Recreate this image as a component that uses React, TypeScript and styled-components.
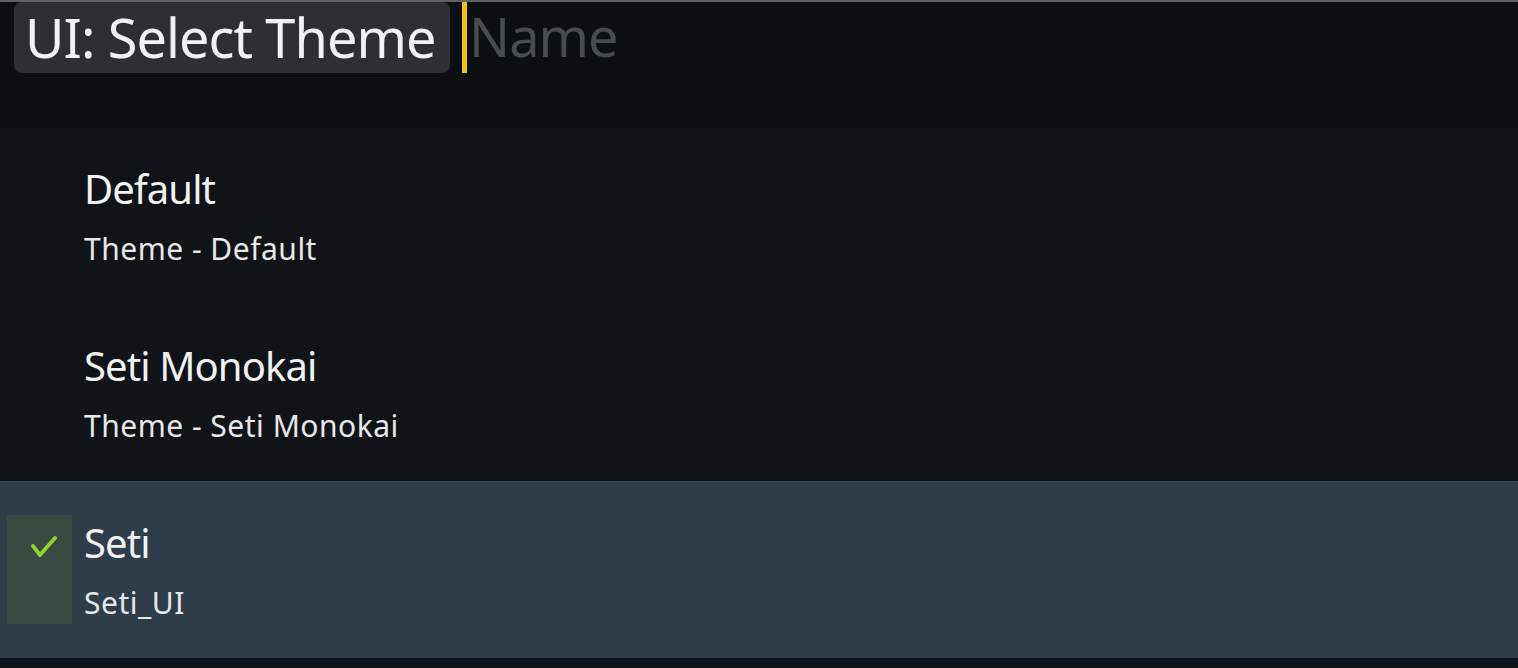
import { createGlobalStyle } from 'styled-components';
import styled from 'styled-components';

const GlobalStyle = createGlobalStyle`
  html, body {
    margin: 0;
    padding: 0;
    background: #0f1317;
  }
  body {
    font-family: 'Noto Sans', 'Open Sans', sans-serif;
    -webkit-font-smoothing: antialiased;
  }
`;

const Palette = styled.div`
  width: 1518px;
  height: 668px;
  display: flex;
  flex-direction: column;
  background: #0f1317;
  border-top: 2px solid #5e6163;
  box-sizing: border-box;
  overflow: hidden;
`;

const Header = styled.div`
  height: 126px;
  flex-shrink: 0;
  display: flex;
  align-items: flex-start;
  background: #0c1012;
  padding-left: 14px;
  box-sizing: border-box;
`;

const Prefix = styled.div`
  width: 436px;
  height: 71px;
  display: flex;
  align-items: center;
  padding: 0 0 2px 11px;
  box-sizing: border-box;
  background: #2c3032;
  border-radius: 8px;
  color: #f2f2f2;
  font-size: 54px;
  letter-spacing: -0.9px;
  white-space: nowrap;
`;

const Input = styled.div`
  height: 73px;
  margin-top: -2px;
  margin-left: 12px;
  display: flex;
  align-items: center;
  border-left: 5px solid #f2c21b;
  color: #474c4f;
  font-size: 54px;
  letter-spacing: -0.9px;
  padding: 0 0 2px 2px;
  box-sizing: border-box;
`;

const List = styled.div`
  display: flex;
  flex-direction: column;
  background: #101419;
`;

const Row = styled.div<{ $active?: boolean }>`
  height: 176.5px;
  display: flex;
  align-items: center;
  background: ${(p) => (p.$active ? '#2f3c4a' : 'transparent')};
  border-top: ${(p) => (p.$active ? '1px solid #3a4654' : 'none')};
  box-sizing: border-box;
`;

const CheckCell = styled.div<{ $active?: boolean }>`
  width: 65px;
  height: 109px;
  margin-left: 7px;
  margin-right: 12px;
  padding: 21px 0 0 23px;
  box-sizing: border-box;
  background: ${(p) => (p.$active ? '#3a4a41' : 'transparent')};
`;

const Texts = styled.div`
  display: flex;
  flex-direction: column;
  gap: 14px;
  margin-top: 0;
`;

const Title = styled.div`
  color: #f2f2f2;
  font-size: 40px;
  line-height: 52px;
  letter-spacing: -0.9px;
  white-space: nowrap;
`;

const Sub = styled.div`
  color: #e8e8e8;
  font-size: 30px;
  line-height: 40px;
  letter-spacing: 0.5px;
  white-space: nowrap;
`;

const themes = [
  { name: 'Default', desc: 'Theme - Default' },
  { name: 'Seti Monokai', desc: 'Theme - Seti Monokai' },
  { name: 'Seti', desc: 'Seti_UI', active: true },
];

export default function App() {
  return (
    <>
      <GlobalStyle />
      <Palette>
        <Header>
          <Prefix>UI: Select Theme</Prefix>
          <Input>Name</Input>
        </Header>
        <List>
          {themes.map((t) => (
            <Row key={t.name} $active={t.active}>
              <CheckCell $active={t.active}>
                {t.active && (
                  <svg width="28" height="24" viewBox="0 0 28 24">
                    <path d="M3 10 L10 19 L25 2" fill="none" stroke="#8fd42a" strokeWidth="3.8" strokeLinecap="round" strokeLinejoin="round" />
                  </svg>
                )}
              </CheckCell>
              <Texts>
                <Title>{t.name}</Title>
                <Sub>{t.desc}</Sub>
              </Texts>
            </Row>
          ))}
        </List>
      </Palette>
    </>
  );
}
